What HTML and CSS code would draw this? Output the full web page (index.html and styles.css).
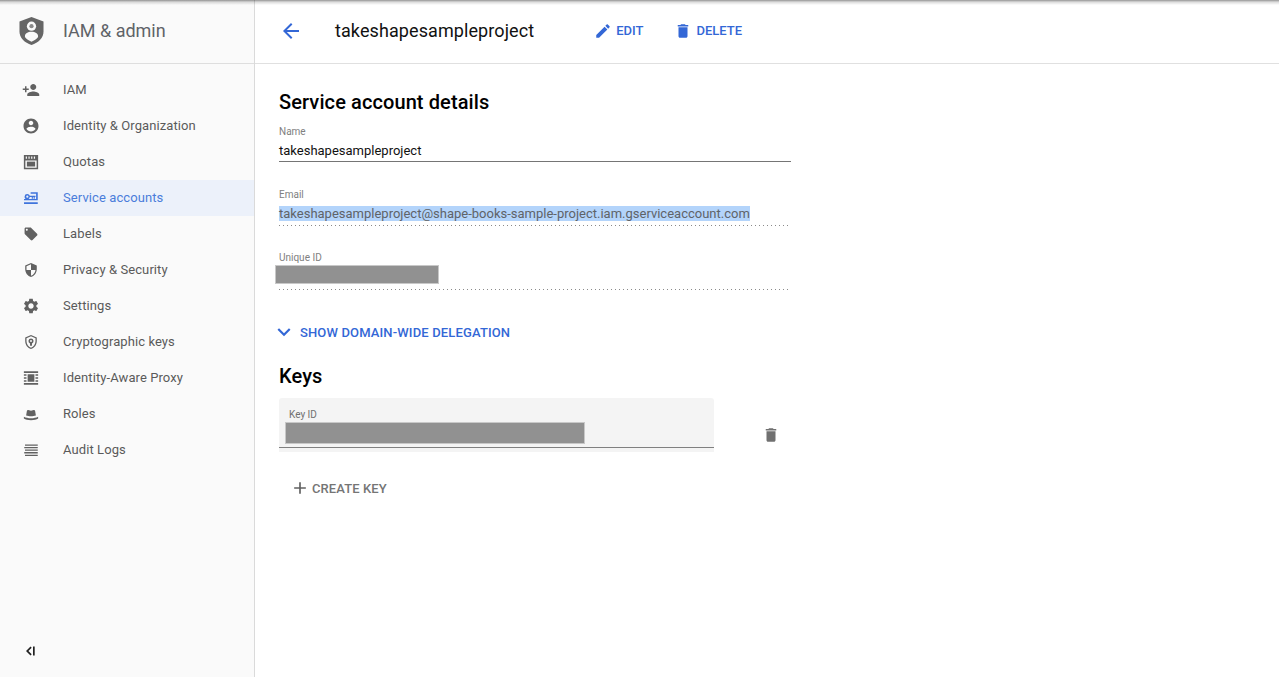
FILE: index.html
```html
<!DOCTYPE html>
<html lang="en">
<head>
<meta charset="utf-8">
<title>Service account details</title>
<link rel="stylesheet" href="styles.css">
</head>
<body>
<div class="top-shadow"></div>
<div class="app">
  <aside class="sidebar">
    <div class="brand">
      <svg class="brand-logo" viewBox="0 0 26 30"><path class="logo-shield" d="M13 0.5 25.500 5v10.500c0 6.700-5.300 11.800-12.500 14-7.200-2.200-12.500-7.300-12.500-14V5z"/><circle class="logo-cut" cx="13" cy="10" r="4.800"/><circle class="logo-eye" cx="13" cy="10" r="2.200"/><path class="logo-cut" d="M13 15.800c-3.800 0-6.800 1.900-6.800 4.300v1.200c1.500 2.100 4 3.900 6.800 4.900 2.800-1 5.300-2.800 6.800-4.900v-1.200c0-2.400-3-4.300-6.800-4.300z"/></svg>
      <span class="brand-name">IAM &amp; admin</span>
    </div>
    <nav class="nav">
      <a class="nav-item"><svg class="icon" viewBox="0 0 24 24"><path d="M15 12c2.210 0 4-1.790 4-4s-1.790-4-4-4-4 1.790-4 4 1.790 4 4 4zm-9-2V7H4v3H1v2h3v3h2v-3h3v-2H6zm9 4c-2.670 0-8 1.340-8 4v2h16v-2c0-2.660-5.330-4-8-4z"/></svg>IAM</a>
      <a class="nav-item"><svg class="icon" viewBox="0 0 24 24"><path d="M12 2C6.480 2 2 6.480 2 12s4.480 10 10 10 10-4.480 10-10S17.520 2 12 2zm0 3c1.660 0 3 1.340 3 3s-1.340 3-3 3-3-1.340-3-3 1.340-3 3-3zm0 14.200c-2.500 0-4.710-1.280-6-3.220.03-1.990 4-3.080 6-3.080 1.990 0 5.970 1.090 6 3.080-1.290 1.940-3.500 3.220-6 3.220z"/></svg>Identity &amp; Organization</a>
      <a class="nav-item"><svg class="icon" viewBox="0 0 24 24"><path fill-rule="evenodd" d="M2.500 2.500h19v19h-19zM4.500 10v9.500h15V10zM5 4.500v3h1.600v-3zM8.600 4.500v3h1.600v-3zM12.200 4.500v3h1.600v-3zM15.800 4.500v3h1.600v-3z"/><path d="M6.500 11.500h11v6.500h-11z"/></svg>Quotas</a>
      <a class="nav-item is-active"><svg class="icon" viewBox="0 0 24 24"><path fill-rule="evenodd" d="M7.100 6.700a3.500 3.500 0 0 1 3.300 2.400H18v1.700h-1v2.200h-1.500v-2.200h-1v2.200H13v-2.200h-2.600a3.500 3.500 0 1 1-3.300-4.100zm0 2a1.500 1.500 0 1 0 0 3 1.500 1.500 0 0 0 0-3z"/><path d="M11.500 4.400H21V15H2.700v-1.700h16.100V6.200h-7.300zM2.700 17.800H21V20H2.700z"/></svg>Service accounts</a>
      <a class="nav-item"><svg class="icon" viewBox="-2 -2 28 28"><path d="M21.410 11.580l-9-9C12.050 2.220 11.550 2 11 2H4c-1.100 0-2 .9-2 2v7c0 .55.22 1.050.59 1.420l9 9c.36.36.86.58 1.410.58.55 0 1.050-.22 1.410-.59l7-7c.37-.36.59-.86.59-1.410 0-.55-.23-1.060-.59-1.420zM5.500 7C4.670 7 4 6.330 4 5.500S4.670 4 5.500 4 7 4.670 7 5.500 6.330 7 5.500 7z"/></svg>Labels</a>
      <a class="nav-item"><svg class="icon" viewBox="-2 -2 28 28"><path d="M12 1L3 5v6c0 5.550 3.840 10.740 9 12 5.160-1.260 9-6.450 9-12V5l-9-4zm0 10.990h7c-.53 4.120-3.280 7.790-7 8.940V12H5V6.300l7-3.110v8.800z"/></svg>Privacy &amp; Security</a>
      <a class="nav-item"><svg class="icon" viewBox="0 0 24 24"><path d="M19.140 12.940c.04-.3.06-.61.06-.94 0-.32-.02-.64-.07-.94l2.030-1.580c.18-.14.23-.41.12-.61l-1.920-3.320c-.12-.22-.37-.29-.59-.22l-2.390.96c-.5-.38-1.030-.7-1.620-.94l-.36-2.540c-.04-.24-.24-.41-.48-.41h-3.840c-.24 0-.43.17-.47.41l-.36 2.540c-.59.24-1.130.57-1.620.94l-2.390-.96c-.22-.08-.47 0-.59.22L2.740 8.870c-.12.21-.08.47.12.61l2.030 1.580c-.05.3-.09.63-.09.94s.02.64.07.94l-2.030 1.580c-.18.14-.23.41-.12.61l1.920 3.320c.12.22.37.29.59.22l2.390-.96c.5.38 1.030.7 1.620.94l.36 2.540c.05.24.24.41.48.41h3.840c.24 0 .44-.17.47-.41l.36-2.540c.59-.24 1.130-.56 1.620-.94l2.390.96c.22.08.47 0 .59-.22l1.920-3.320c.12-.22.07-.47-.12-.61l-2.010-1.580zM12 15.600c-1.980 0-3.600-1.620-3.600-3.600s1.620-3.600 3.600-3.600 3.600 1.620 3.600 3.600-1.620 3.600-3.600 3.600z"/></svg>Settings</a>
      <a class="nav-item"><svg class="icon" viewBox="-2 -2 28 28"><path fill-rule="evenodd" d="M12 1L3 5v6c0 5.550 3.840 10.740 9 12 5.160-1.260 9-6.450 9-12V5l-9-4zm0 2.200 7 3.100V11c0 4.500-2.900 8.700-7 9.900-4.100-1.200-7-5.400-7-9.900V6.300z"/><path fill-rule="evenodd" d="M12 6.500a4 4 0 0 1 1.500 7.700V18h-3v-3.800A4 4 0 0 1 12 6.500zm0 2.500a1.500 1.500 0 1 0 0 3 1.500 1.500 0 0 0 0-3z"/></svg>Cryptographic keys</a>
      <a class="nav-item"><svg class="icon" viewBox="0 0 24 24"><path d="M2.500 3h19v2.200h-19zM2.500 18.800h19V21h-19zM2.500 7h3.500v2h-3.500zM2.500 11h3.500v2h-3.500zM2.500 15h3.500v2h-3.500zM18 7h3.500v2H18zM18 11h3.500v2H18zM18 15h3.500v2H18zM7.500 7h9v10h-9z"/></svg>Identity-Aware Proxy</a>
      <a class="nav-item"><svg class="icon" viewBox="0 0 24 24"><path d="M5.500 14l1-6c.2-1 1-1.500 2-1.200l3.500 1 3.500-1c1-.3 1.800.2 2 1.200l1 6c-2 .8-4 1-6.500 1s-4.500-.2-6.500-1zM2.500 15.500c2.500 1.300 5.800 2 9.500 2s7-.7 9.500-2V18c-2 1.500-5.500 2.300-9.500 2.300S4.500 19.500 2.500 18z"/></svg>Roles</a>
      <a class="nav-item"><svg class="icon" viewBox="0 0 24 24"><path d="M4 4.500h17v1.700H4zM3 8h18v1.700H3zM4 11.400h17v1.700H4zM3 14.800h18v1.700H3zM4 18.200h17v1.700H4z"/></svg>Audit Logs</a>
    </nav>
    <div class="collapse"><svg class="collapse-icon" viewBox="0 0 12 12"><path d="M6.500 1.500 2 6l4.500 4.500 1.200-1.200L4.400 6l3.300-3.300zM9 1.500h1.700v9H9z"/></svg></div>
  </aside>
  <main class="main">
    <header class="page-head">
      <svg class="back" viewBox="0 0 24 24"><path d="M20 11H7.830l5.590-5.590L12 4l-8 8 8 8 1.410-1.410L7.830 13H20v-2z"/></svg>
      <h1 class="page-title">takeshapesampleproject</h1>
      <a class="action action-edit"><svg class="action-icon" viewBox="0 0 24 24"><path d="M3 17.250V21h3.750L17.810 9.940l-3.750-3.750L3 17.250zM20.710 7.040c.39-.39.39-1.020 0-1.410l-2.340-2.340c-.39-.39-1.020-.39-1.410 0l-1.830 1.830 3.750 3.750 1.830-1.830z"/></svg>EDIT</a>
      <a class="action"><svg class="action-icon" viewBox="0 0 24 24"><path d="M6 19c0 1.100.9 2 2 2h8c1.100 0 2-.9 2-2V7H6v12zM19 4h-3.500l-1-1h-5l-1 1H5v2h14V4z"/></svg>DELETE</a>
    </header>
    <section class="content">
      <h2 class="section-title">Service account details</h2>
      <div class="field field-name">
        <div class="field-label">Name</div>
        <div class="field-value">takeshapesampleproject</div>
      </div>
      <div class="field field-readonly">
        <div class="field-label">Email</div>
        <div class="field-value field-muted"><span class="selected">takeshapesampleproject@shape-books-sample-project.iam.gserviceaccount.com</span></div>
      </div>
      <div class="field field-readonly field-id">
        <div class="field-label">Unique ID</div>
        <div class="redacted redacted-id"></div>
      </div>
      <a class="toggle"><svg class="toggle-icon" viewBox="0 0 24 24"><path d="M16.590 8.590L12 13.170 7.410 8.590 6 10l6 6 6-6z"/></svg>SHOW DOMAIN-WIDE DELEGATION</a>
      <h2 class="section-title section-keys">Keys</h2>
      <div class="key-row">
        <div class="key-box">
          <div class="key-label">Key ID</div>
          <div class="redacted redacted-key"></div>
          <div class="key-line"></div>
        </div>
        <svg class="key-delete" viewBox="0 0 24 24"><path d="M6 19c0 1.100.9 2 2 2h8c1.100 0 2-.9 2-2V7H6v12zM19 4h-3.500l-1-1h-5l-1 1H5v2h14V4z"/></svg>
      </div>
      <a class="create"><svg class="create-icon" viewBox="0 0 24 24"><path d="M19 13h-6v6h-2v-6H5v-2h6V5h2v6h6v2z"/></svg>CREATE KEY</a>
    </section>
  </main>
</div>
</body>
</html>
```

FILE: styles.css
```css
* { box-sizing: border-box; }
html, body { margin: 0; height: 100%; overflow: hidden; }
body { font-family: Roboto, "Liberation Sans", sans-serif; background: #fff; color: #000; }
.top-shadow { position: absolute; top: 0; left: 0; right: 0; height: 5px; background: linear-gradient(rgba(0,0,0,.42), rgba(0,0,0,.14) 40%, rgba(0,0,0,0)); z-index: 5; }
.app { display: flex; height: 677px; }

.sidebar { width: 255px; flex: none; background: #fafafa; border-right: 1px solid #dadada; display: flex; flex-direction: column; }
.brand { height: 64px; flex: none; display: flex; align-items: center; border-bottom: 1px solid #dedede; padding: 0 0 2px 19px; }
.brand-logo { width: 25px; height: 30px; margin-right: 19px; }
.logo-shield { fill: #666; }
.logo-cut { fill: #fafafa; }
.logo-eye { fill: #8a8a8a; }
.brand-name { font-size: 18px; color: #5f6368; }
.nav { padding-top: 8px; flex: 1; }
.nav-item { display: flex; align-items: center; height: 36px; padding: 0 0 2px 22px; font-size: 13px; letter-spacing: .09px; color: #5a5a5a; }
.icon { width: 18px; height: 18px; margin: 0 23px -2px 0; fill: #616161; flex: none; }
.nav-item.is-active { background: #ecf1fa; color: #4a7ddb; }
.is-active .icon { fill: #3f74dc; }
.collapse { height: 52px; flex: none; padding: 20px 0 0 24px; }
.collapse-icon { display: block; width: 12px; height: 12px; fill: #222; }

.main { flex: 1; min-width: 0; }
.page-head { height: 64px; display: flex; align-items: center; border-bottom: 1px solid #e0e0e0; padding: 0 0 2px 24px; }
.back { width: 24px; height: 24px; fill: #3367d6; margin-right: 32px; flex: none; }
.page-title { margin: 0 60px 0 0; font-size: 18px; font-weight: 400; letter-spacing: .09px; color: #111; }
.action { display: flex; align-items: center; font-size: 13px; font-weight: 500; color: #3367d6; }
.action-edit { margin-right: 31px; }
.action-icon { width: 18px; height: 18px; fill: #3367d6; margin-right: 4px; }

.content { padding: 26px 0 0 24px; }
.section-title { margin: 0; font-size: 20px; line-height: 24px; font-weight: 500; letter-spacing: .1px; color: #000; }
.field { width: 512px; }
.field-label { font-size: 10px; line-height: 12px; color: #808080; }
.field-value { margin-top: 4px; font-size: 13px; line-height: 18px; color: #111; }
.field-name { margin-top: 12px; padding-bottom: 1px; border-bottom: 1px solid #757575; }
.field-readonly { position: relative; margin-top: 27px; width: 510px; padding-bottom: 3px; }
.field-readonly::after { content: ""; position: absolute; left: 0; right: 0; bottom: 0; height: 1px; background: repeating-linear-gradient(90deg, #8a8a8a 0 1px, transparent 1px 4px); }
.field-muted { color: #5f6368; }
.selected { background: #b3d4fb; }
.field-id { margin-top: 26px; padding-bottom: 6px; }
.redacted { background: #919191; border: 1px solid #c8c8c8; }
.redacted-id { width: 164px; height: 19px; margin: 1px 0 0 -4px; }
.toggle { display: flex; align-items: center; margin-top: 30px; height: 24px; font-size: 13px; font-weight: 500; letter-spacing: .14px; color: #3367d6; }
.toggle-icon { width: 26px; height: 26px; margin: 0 3px 0 -8px; fill: #3367d6; }
.section-keys { margin-top: 20px; }
.key-row { display: flex; align-items: flex-start; margin-top: 10px; }
.key-box { width: 435px; height: 54px; background: #f4f4f4; border-radius: 3px 3px 0 0; padding-top: 11px; }
.key-label { font-size: 10px; line-height: 12px; color: #707070; padding-left: 10px; }
.redacted-key { width: 300px; height: 22px; margin: 1px 0 0 6px; }
.key-line { margin-top: 3px; height: 1px; background: #808080; }
.key-delete { width: 18px; height: 18px; margin: 28px 0 0 48px; fill: #707070; }
.create { display: flex; align-items: center; margin: 26px 0 0 11px; font-size: 13px; font-weight: 500; letter-spacing: .1px; color: #757575; }
.create-icon { width: 20px; height: 20px; fill: #616161; margin-right: 2px; }
```
